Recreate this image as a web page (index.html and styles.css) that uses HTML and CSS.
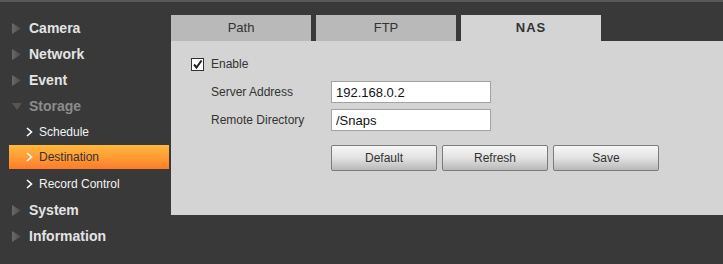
FILE: index.html
```html
<!DOCTYPE html>
<html lang="en">
<head>
  <meta charset="UTF-8">
  <meta name="viewport" content="width=device-width, initial-scale=1.0">
  <title>Storage - Destination</title>
  <link rel="stylesheet" href="styles.css">
</head>
<body>

<div class="page">
  <ul class="menu">
    <li class="menu-item">
      <svg class="arrow" width="10" height="11" viewBox="0 0 10 11"><defs><linearGradient id="tri" x1="0" y1="0" x2="1" y2="0"><stop offset="0" stop-color="#6a6a6a"/><stop offset="1" stop-color="#4a4a4a"/></linearGradient></defs><polygon points="0,0 9,5.5 0,11" fill="url(#tri)"/></svg>
      <span>Camera</span>
    </li>
    <li class="menu-item">
      <svg class="arrow" width="10" height="11" viewBox="0 0 10 11"><polygon points="0,0 9,5.5 0,11" fill="url(#tri)"/></svg>
      <span>Network</span>
    </li>
    <li class="menu-item">
      <svg class="arrow" width="10" height="11" viewBox="0 0 10 11"><polygon points="0,0 9,5.5 0,11" fill="url(#tri)"/></svg>
      <span>Event</span>
    </li>
    <li class="menu-item open">
      <svg class="arrow" width="10" height="11" viewBox="0 0 10 11"><polygon points="0,2 10,2 5,9" fill="#555"/></svg>
      <span>Storage</span>
    </li>
    <li class="sub-item">
      <svg class="chevron" width="7" height="10" viewBox="0 0 7 10"><polyline points="1,1 5.5,5 1,9" fill="none" stroke="#fff" stroke-width="1.6"/></svg>
      <span>Schedule</span>
    </li>
    <li class="sub-item active">
      <svg class="chevron" width="7" height="10" viewBox="0 0 7 10"><polyline points="1,1 5.5,5 1,9" fill="none" stroke="#fff" stroke-width="1.6"/></svg>
      <span>Destination</span>
    </li>
    <li class="sub-item">
      <svg class="chevron" width="7" height="10" viewBox="0 0 7 10"><polyline points="1,1 5.5,5 1,9" fill="none" stroke="#fff" stroke-width="1.6"/></svg>
      <span>Record Control</span>
    </li>
    <li class="menu-item">
      <svg class="arrow" width="10" height="11" viewBox="0 0 10 11"><polygon points="0,0 9,5.5 0,11" fill="url(#tri)"/></svg>
      <span>System</span>
    </li>
    <li class="menu-item">
      <svg class="arrow" width="10" height="11" viewBox="0 0 10 11"><polygon points="0,0 9,5.5 0,11" fill="url(#tri)"/></svg>
      <span>Information</span>
    </li>
  </ul>

  <div class="content">
    <div class="tabs">
      <div class="tab">Path</div>
      <div class="tab">FTP</div>
      <div class="tab selected">NAS</div>
    </div>

    <div class="panel">
      <label class="enable-row">
        <span class="checkbox">
          <svg width="11" height="11" viewBox="0 0 11 11"><polyline points="2,5.5 4.5,8.5 9.5,1.5" fill="none" stroke="#222" stroke-width="2"/></svg>
        </span>
        <span>Enable</span>
      </label>

      <div class="field-row">
        <span class="field-label">Server Address</span>
        <input class="field-input" type="text" value="192.168.0.2">
      </div>
      <div class="field-row">
        <span class="field-label">Remote Directory</span>
        <input class="field-input" type="text" value="/Snaps">
      </div>

      <div class="buttons">
        <button class="btn">Default</button>
        <button class="btn">Refresh</button>
        <button class="btn">Save</button>
      </div>
    </div>
  </div>
</div>

</body>
</html>
```

FILE: styles.css
```css
html, body {
  margin: 0;
  padding: 0;
}
body {
  font-family: Arial, "Liberation Sans", sans-serif;
  background-color: #393939;
  border-top: 2px solid #595959;
  height: 262px;
  overflow: hidden;
}
.page {
  display: flex;
}
.menu {
  list-style: none;
  margin: 13px 0 0 0;
  padding: 0;
  width: 171px;
}
.menu-item {
  display: flex;
  align-items: center;
  height: 26px;
  padding-left: 12px;
  font-size: 14px;
  font-weight: bold;
  color: #e4e4e4;
}
.menu-item .arrow {
  margin-right: 7px;
}
.menu-item.open {
  color: #8c8c8c;
}
.sub-item {
  display: flex;
  align-items: center;
  height: 26px;
  padding-left: 26px;
  font-size: 12px;
  color: #f2f2f2;
}
.sub-item .chevron {
  margin-right: 6px;
}
.sub-item.active {
  height: 24px;
  margin: 0 2px 2px 9px;
  padding-left: 17px;
  background: linear-gradient(to bottom, #ffb83e, #ff9a34 55%, #ff7a2a);
  color: #333;
}
.content {
  flex: 1;
  margin-top: 13px;
}
.tabs {
  display: flex;
  gap: 5px;
  height: 26px;
}
.tab {
  width: 140px;
  background: #b9b9b9;
  color: #333;
  font-size: 13px;
  text-align: center;
  line-height: 26px;
}
.tab.selected {
  background: #d4d4d4;
  font-weight: bold;
  letter-spacing: 1px;
}
.panel {
  background: #d4d4d4;
  height: 174px;
  padding-top: 16px;
  box-sizing: border-box;
  font-size: 12px;
  color: #333;
}
.enable-row {
  display: flex;
  align-items: center;
  gap: 7px;
  height: 14px;
  padding-left: 20px;
}
.checkbox {
  display: flex;
  align-items: center;
  justify-content: center;
  width: 11px;
  height: 11px;
  border: 1px solid #333;
  background: #fff;
}
.field-row {
  display: flex;
  align-items: center;
  margin: 10px 0 0 40px;
}
.field-row + .field-row {
  margin-top: 6px;
}
.field-label {
  width: 120px;
}
.field-input {
  box-sizing: border-box;
  width: 160px;
  height: 22px;
  margin: 0;
  padding: 0 4px;
  border: 1px solid #a3a3a3;
  background: #fff;
  font-family: Arial, "Liberation Sans", sans-serif;
  font-size: 13px;
  color: #111;
  outline: none;
}
.buttons {
  display: flex;
  gap: 5px;
  margin: 14px 0 0 160px;
}
.btn {
  width: 106px;
  height: 26px;
  margin: 0;
  padding: 0;
  border: 1px solid #7b7b7b;
  border-radius: 2px;
  background: linear-gradient(to bottom, #f7f7f7, #e2e2e2 50%, #b8b8b8);
  font-family: Arial, "Liberation Sans", sans-serif;
  font-size: 12px;
  color: #333;
}
```
